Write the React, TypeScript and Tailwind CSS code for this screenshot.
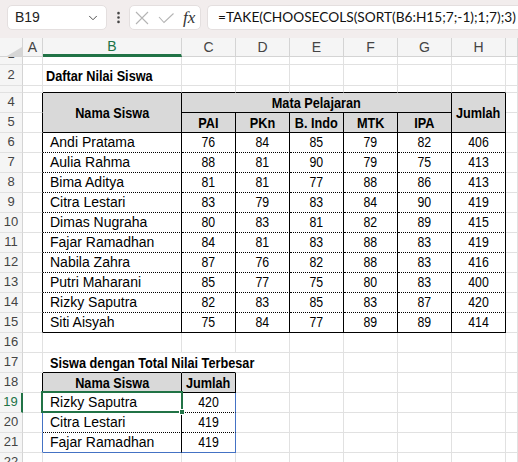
import React from "react";
import { ChevronDown, EllipsisVertical } from "lucide-react";

type B = "G" | "K" | "D" | "L" | "W";

const RIGHT: Record<B, string> = {
  G: "border-r-[#e1e1e1]",
  K: "border-r-black",
  D: "border-r-black",
  L: "border-r-[#4472c4]",
  W: "border-r-white",
};
const BOTTOM: Record<B, string> = {
  G: "border-b-[#e1e1e1]",
  K: "border-b-black",
  D: "border-b-black [border-bottom-style:dotted]",
  L: "border-b-[#4472c4]",
  W: "border-b-white",
};

const DATA: [string, number, number, number, number, number, number][] = [
  ["Andi Pratama", 76, 84, 85, 79, 82, 406],
  ["Aulia Rahma", 88, 81, 90, 79, 75, 413],
  ["Bima Aditya", 81, 81, 77, 88, 86, 413],
  ["Citra Lestari", 83, 79, 83, 84, 90, 419],
  ["Dimas Nugraha", 80, 83, 81, 82, 89, 415],
  ["Fajar Ramadhan", 84, 81, 83, 88, 83, 419],
  ["Nabila Zahra", 87, 76, 82, 88, 83, 416],
  ["Putri Maharani", 85, 77, 75, 80, 83, 400],
  ["Rizky Saputra", 82, 83, 85, 83, 87, 420],
  ["Siti Aisyah", 75, 84, 77, 89, 89, 414],
];

const TOP: [string, number][] = [
  ["Rizky Saputra", 420],
  ["Citra Lestari", 419],
  ["Fajar Ramadhan", 419],
];

function borders(r: number, c: number): [B, B] {
  let right: B = "G";
  let bottom: B = "G";
  if (r >= 4 && r <= 15) {
    if (c >= 1 && c <= 8) right = "K";
    if (c >= 2 && c <= 8) bottom = r === 4 || r === 5 || r === 15 ? "K" : "D";
  }
  if (r === 3 && c >= 2 && c <= 8) bottom = "K";
  if (r === 17 && (c === 2 || c === 3)) {
    bottom = "K";
    right = "W";
  }
  if (r === 18) {
    if (c >= 1 && c <= 3) right = "K";
    if (c === 2 || c === 3) bottom = "K";
  }
  if (r >= 19 && r <= 21) {
    if (c === 1) right = "L";
    if (c === 2) right = "K";
    if (c === 3) right = "L";
    if (c === 2 || c === 3) bottom = r < 21 ? "D" : "L";
  }
  return [right, bottom];
}

const NAME = "font-['Liberation_Sans',sans-serif] text-[14px] text-black";
const NUM =
  "inline-block scale-x-[0.82] font-['Liberation_Sans',sans-serif] text-[15px] text-black";
const BOLD =
  "inline-block scale-x-[0.82] font-['Liberation_Sans',sans-serif] text-[15.5px] font-bold text-black";
const BOLD_LEFT =
  "inline-block origin-left scale-x-[0.82] whitespace-nowrap font-['Liberation_Sans',sans-serif] text-[15.5px] font-bold text-black";

function Cell({
  r,
  c,
  extra = "",
  children,
}: {
  r: number;
  c: number;
  extra?: string;
  children?: React.ReactNode;
}) {
  const [rt, bt] = borders(r, c);
  return (
    <div
      className={`box-border flex items-center border-r border-b border-solid ${RIGHT[rt]} ${BOTTOM[bt]} ${extra}`}
    >
      {children}
    </div>
  );
}

function RowHead({ r }: { r: number }) {
  const sel = r === 19;
  return (
    <div
      className={`box-border flex items-end justify-center overflow-hidden border-b border-solid border-b-[#e1e1e1] bg-[#f5f5f5] ${
        sel ? "border-r-2 border-r-[#217346] text-[#217346]" : "border-r border-r-[#d4d4d4] text-[#444]"
      }`}
    >
      <span className="font-['Liberation_Sans',sans-serif] text-[13px] leading-[20px]">{r}</span>
    </div>
  );
}

function rowCells(r: number): React.ReactNode[] {
  const out: React.ReactNode[] = [<RowHead key="h" r={r} />];
  for (let c = 1; c <= 9; c++) {
    const k = `${r}-${c}`;
    if (r === 5 && (c === 2 || c === 8)) continue;
    if (r === 4 && c >= 4 && c <= 7) continue;

    if (r === 2 && c === 2) {
      out.push(
        <Cell key={k} r={r} c={c} extra="pl-[3px] pt-[1px]">
          <span className={BOLD_LEFT}>Daftar Nilai Siswa</span>
        </Cell>
      );
      continue;
    }
    if (r === 4 && c === 2) {
      out.push(
        <Cell key={k} r={r} c={c} extra="row-span-2 justify-center bg-[#d9d9d9]">
          <span className={BOLD}>Nama Siswa</span>
        </Cell>
      );
      continue;
    }
    if (r === 4 && c === 3) {
      out.push(
        <Cell key={k} r={r} c={8} extra="col-span-5 justify-center bg-[#d9d9d9]">
          <span className={BOLD}>Mata Pelajaran</span>
        </Cell>
      );
      continue;
    }
    if (r === 4 && c === 8) {
      out.push(
        <Cell key={k} r={r} c={c} extra="row-span-2 justify-center bg-[#d9d9d9]">
          <span className={BOLD}>Jumlah</span>
        </Cell>
      );
      continue;
    }
    if (r === 5 && c >= 3 && c <= 7) {
      const labels = ["PAI", "PKn", "B. Indo", "MTK", "IPA"];
      out.push(
        <Cell key={k} r={r} c={c} extra="justify-center bg-[#d9d9d9]">
          <span className={BOLD}>{labels[c - 3]}</span>
        </Cell>
      );
      continue;
    }
    if (r >= 6 && r <= 15 && c >= 2 && c <= 8) {
      const row = DATA[r - 6];
      if (c === 2) {
        out.push(
          <Cell key={k} r={r} c={c} extra="pl-[7px]">
            <span className={`${NAME} whitespace-nowrap`}>{row[0]}</span>
          </Cell>
        );
      } else {
        out.push(
          <Cell key={k} r={r} c={c} extra="justify-center">
            <span className={NUM}>{row[c - 2]}</span>
          </Cell>
        );
      }
      continue;
    }
    if (r === 17 && c === 2) {
      out.push(
        <Cell key={k} r={r} c={c} extra="relative z-10 pl-[7px] overflow-visible">
          <span className={BOLD_LEFT}>Siswa dengan Total Nilai Terbesar</span>
        </Cell>
      );
      continue;
    }
    if (r === 18 && (c === 2 || c === 3)) {
      out.push(
        <Cell key={k} r={r} c={c} extra="justify-center bg-[#d9d9d9]">
          <span className={BOLD}>{c === 2 ? "Nama Siswa" : "Jumlah"}</span>
        </Cell>
      );
      continue;
    }
    if (r >= 19 && r <= 21 && (c === 2 || c === 3)) {
      const row = TOP[r - 19];
      if (c === 2) {
        out.push(
          <Cell key={k} r={r} c={c} extra={`pl-[7px] ${r === 19 ? "relative z-20" : ""}`}>
            <span className={`${NAME} whitespace-nowrap`}>{row[0]}</span>
            {r === 19 && (
              <>
                <div className="pointer-events-none absolute -left-[2px] -top-[2px] h-[22px] w-[142px] border-2 border-[#217346]" />
                <div className="pointer-events-none absolute left-[136px] top-[16px] h-[6px] w-[6px] border border-white bg-[#217346]" />
              </>
            )}
          </Cell>
        );
      } else {
        out.push(
          <Cell key={k} r={r} c={c} extra="justify-center">
            <span className={NUM}>{row[1]}</span>
          </Cell>
        );
      }
      continue;
    }
    out.push(<Cell key={k} r={r} c={c} />);
  }
  return out;
}

function ColHeaders() {
  const letters = ["A", "B", "C", "D", "E", "F", "G", "H", ""];
  return (
    <>
      <div className="box-border relative border-r border-b border-solid border-r-[#d4d4d4] border-b-[#d4d4d4] bg-[#f5f5f5]">
        <svg className="absolute left-[7px] top-[9px]" width="15" height="9" viewBox="0 0 15 9">
          <polygon points="15,0 15,9 0,9" fill="#d6d6d6" />
        </svg>
      </div>
      {letters.map((l, i) => {
        const sel = l === "B";
        return (
          <div
            key={i}
            className={`box-border flex items-center justify-center border-r border-solid border-r-[#d4d4d4] bg-[#f5f5f5] font-['Liberation_Sans',sans-serif] text-[14px] ${
              sel
                ? "border-b-[3px] border-b-[#217346] text-[#217346]"
                : "border-b border-b-[#d4d4d4] text-[#444]"
            }`}
          >
            {l}
          </div>
        );
      })}
    </>
  );
}

function TopBar() {
  return (
    <div className="flex h-[38px] items-start bg-[#f2eded] pl-[7px] pt-[5px]">
      <div className="box-border flex h-[25px] w-[100px] items-center justify-between rounded-[5px] border border-[#e4dfdf] bg-white pl-[7px] pr-[6px]">
        <span className="font-['Liberation_Sans',sans-serif] text-[14px] text-[#222]">B19</span>
        <ChevronDown size={14} strokeWidth={1.6} className="text-[#444]" />
      </div>
      <div className="flex h-[25px] w-[22px] items-center justify-center">
        <EllipsisVertical size={15} strokeWidth={2.2} className="text-[#444]" />
      </div>
      <div className="box-border flex h-[25px] w-[72px] items-center rounded-[5px] border border-[#e4dfdf] bg-white pl-[5px]">
        <svg width="14" height="14" viewBox="0 0 14 14">
          <path d="M1 1L13 13M13 1L1 13" stroke="#b4b4b4" strokeWidth="1.1" fill="none" />
        </svg>
        <svg width="16" height="12" viewBox="0 0 16 12" className="ml-[9px]">
          <path d="M1 5L6 10.5L15.5 1.5" stroke="#b4b4b4" strokeWidth="1.1" fill="none" />
        </svg>
        <span className="ml-[9px] font-['Liberation_Serif',serif] text-[17px] italic leading-none text-[#333]">
          fx
        </span>
      </div>
      <div className="ml-[6px] box-border flex h-[25px] flex-1 items-center rounded-l-[5px] border border-r-0 border-[#e4dfdf] bg-white pl-[10px]">
        <span className="whitespace-nowrap font-['Lato',sans-serif] text-[13.7px] text-[#111]">
          =TAKE(CHOOSECOLS(SORT(B6:H15;7;-1);1;7);3)
        </span>
      </div>
    </div>
  );
}

export default function App() {
  const rows: React.ReactNode[] = [];
  for (let r = 1; r <= 22; r++) rows.push(...rowCells(r));
  return (
    <div className="h-[462px] w-[518px] overflow-hidden bg-white">
      <TopBar />
      <div className="grid grid-cols-[23px_20px_139px_54px_54px_54px_54px_54px_54px_1fr] grid-rows-[19px_8px_21px_7px_repeat(19,20px)]">
        <ColHeaders />
        {rows}
      </div>
    </div>
  );
}
